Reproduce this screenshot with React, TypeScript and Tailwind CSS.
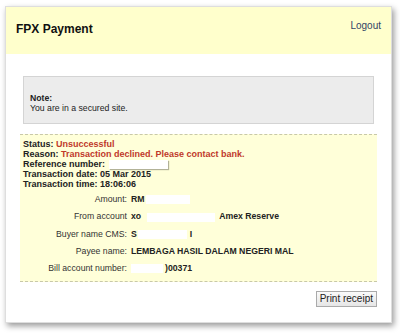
const rows: { label: string; value: React.ReactNode }[] = [
  {
    label: "Amount:",
    value: (
      <>
        RM<span className="ml-[1px] inline-block h-[9px] w-[44px] bg-white align-middle" />
      </>
    ),
  },
  {
    label: "From account",
    value: (
      <>
        xo<span className="ml-[6px] mr-[4px] inline-block h-[9px] w-[68px] bg-white align-middle" />
        Amex Reserve
      </>
    ),
  },
  {
    label: "Buyer name CMS:",
    value: (
      <>
        S<span className="ml-[1px] mr-[3px] inline-block h-[9px] w-[49px] bg-white align-middle" />I
      </>
    ),
  },
  { label: "Payee name:", value: "LEMBAGA HASIL DALAM NEGERI MAL" },
  {
    label: "Bill account number:",
    value: (
      <>
        <span className="mr-[2px] inline-block h-[9px] w-[32px] bg-white align-middle" />
        )00371
      </>
    ),
  },
];

export default function App() {
  return (
    <div className="h-[334px] w-[400px] bg-white pl-[5px] pt-[6px] font-['Liberation_Sans',Arial,sans-serif] text-[8.7px] text-[#222]">
      <div className="flex h-[317px] w-[387px] flex-col border border-[#dedede] bg-white shadow-[2px_3px_6px_rgba(0,0,0,0.4)]">
        <div className="flex h-[47px] items-start justify-between bg-[#ffffcc] pl-[10px] pr-[10px]">
          <h1 className="mt-[13px] text-[12px] font-bold text-[#111]">FPX Payment</h1>
          <a className="mt-[11px] text-[10px] text-[#334466]">Logout</a>
        </div>

        <div className="mx-[17px] mt-[22px] flex h-[48px] flex-col justify-center border border-[#d4d4d4] bg-[#ececec] px-[6px] pt-[5px] leading-[10px]">
          <p className="font-bold">Note:</p>
          <p>You are in a secured site.</p>
        </div>

        <div className="mx-[14px] mt-[10px] border-y border-dashed border-[#c8c8a8] bg-[#ffffd9] pb-[8px] pl-[3px] pt-[4px]">
          <div className="text-[9px] font-bold leading-[10px]">
            <p>
              Status: <span className="text-[#c0392b]">Unsuccessful</span>
            </p>
            <p>
              Reason: <span className="text-[#c0392b]">Transaction declined. Please contact bank.</span>
            </p>
            <p>
              Reference number:{" "}
              <span className="ml-[1px] inline-block h-[9px] w-[59px] bg-white align-middle shadow-[1px_1px_1px_rgba(0,0,0,0.3)]" />
            </p>
            <p>Transaction date: 05 Mar 2015</p>
            <p>Transaction time: 18:06:06</p>
          </div>

          <div className="mt-[5px] grid grid-cols-[104px_1fr] gap-x-[4px] gap-y-[7px] leading-[10px]">
            {rows.map((r) => (
              <div key={r.label} className="contents">
                <span className="text-right text-[#333]">{r.label}</span>
                <span className="font-bold">{r.value}</span>
              </div>
            ))}
          </div>
        </div>

        <div className="mr-[14px] mt-[9px] flex justify-end">
          <button className="h-[16px] border border-[#aaa] bg-gradient-to-b from-[#fafafa] to-[#e6e6e6] px-[3px] text-[10px] leading-[14px] text-[#222]">
            Print receipt
          </button>
        </div>
      </div>
    </div>
  );
}
